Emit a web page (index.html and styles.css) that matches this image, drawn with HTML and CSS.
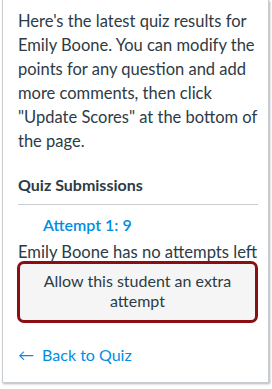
FILE: index.html
```html
<!DOCTYPE html>
<html lang="en">
<head>
    <meta charset="UTF-8">
    <meta name="viewport" content="width=device-width, initial-scale=1.0">
    <title>Quiz Submissions</title>
    <link rel="stylesheet" href="styles.css">
</head>
<body>
    <div class="panel">
        <p class="intro">Here's the latest quiz results for Emily Boone. You can modify the points for any question and add more comments, then click "Update Scores" at the bottom of the page.</p>

        <h2 class="section-title">Quiz Submissions</h2>

        <div class="attempts">
            <a class="attempt-link" href="#">Attempt 1: 9</a>
        </div>

        <p class="no-attempts">Emily Boone has no attempts left</p>

        <button class="extra-btn">Allow this student an extra attempt</button>

        <a class="back-link" href="#"><span class="arrow">&larr;</span> Back to Quiz</a>
    </div>
</body>
</html>
```

FILE: styles.css
```css
* {
    margin: 0;
    padding: 0;
    box-sizing: border-box;
}

body {
    font-family: Lato, 'Liberation Sans', sans-serif;
    background: #fff;
    color: #2d3b45;
    width: 272px;
    height: 389px;
    overflow: hidden;
}

.panel {
    margin-left: 2px;
    width: 267px;
    border: 1px solid #c7cdd1;
    border-top: none;
    box-shadow: 1px 1px 2px rgba(0, 0, 0, 0.3);
    padding: 9px 10px 16px 15px;
    background: #fff;
}

.intro {
    font-size: 16.5px;
    line-height: 24px;
}

.section-title {
    font-size: 16px;
    font-weight: bold;
    margin-top: 22px;
    padding-bottom: 10px;
    border-bottom: 1px solid #c7cdd1;
}

.attempts {
    padding: 9px 0 0 25px;
}

.attempt-link {
    color: #008ee2;
    text-decoration: none;
    font-size: 16px;
    font-weight: 600;
    line-height: 22px;
}

.no-attempts {
    font-size: 16.6px;
    line-height: 16px;
    margin-top: 8px;
}

.extra-btn {
    display: block;
    width: 241px;
    margin-top: 1px;
    margin-left: -1px;
    padding: 7px 14px 9px;
    background: #f5f5f5;
    border: 3px solid #8b0e12;
    border-radius: 7px;
    font-family: inherit;
    font-size: 16px;
    line-height: 20px;
    color: #2d3b45;
}

.back-link {
    display: block;
    margin-top: 21px;
    color: #008ee2;
    text-decoration: none;
    font-size: 16px;
    line-height: 22px;
}

.arrow {
    margin-right: 4px;
}
```
